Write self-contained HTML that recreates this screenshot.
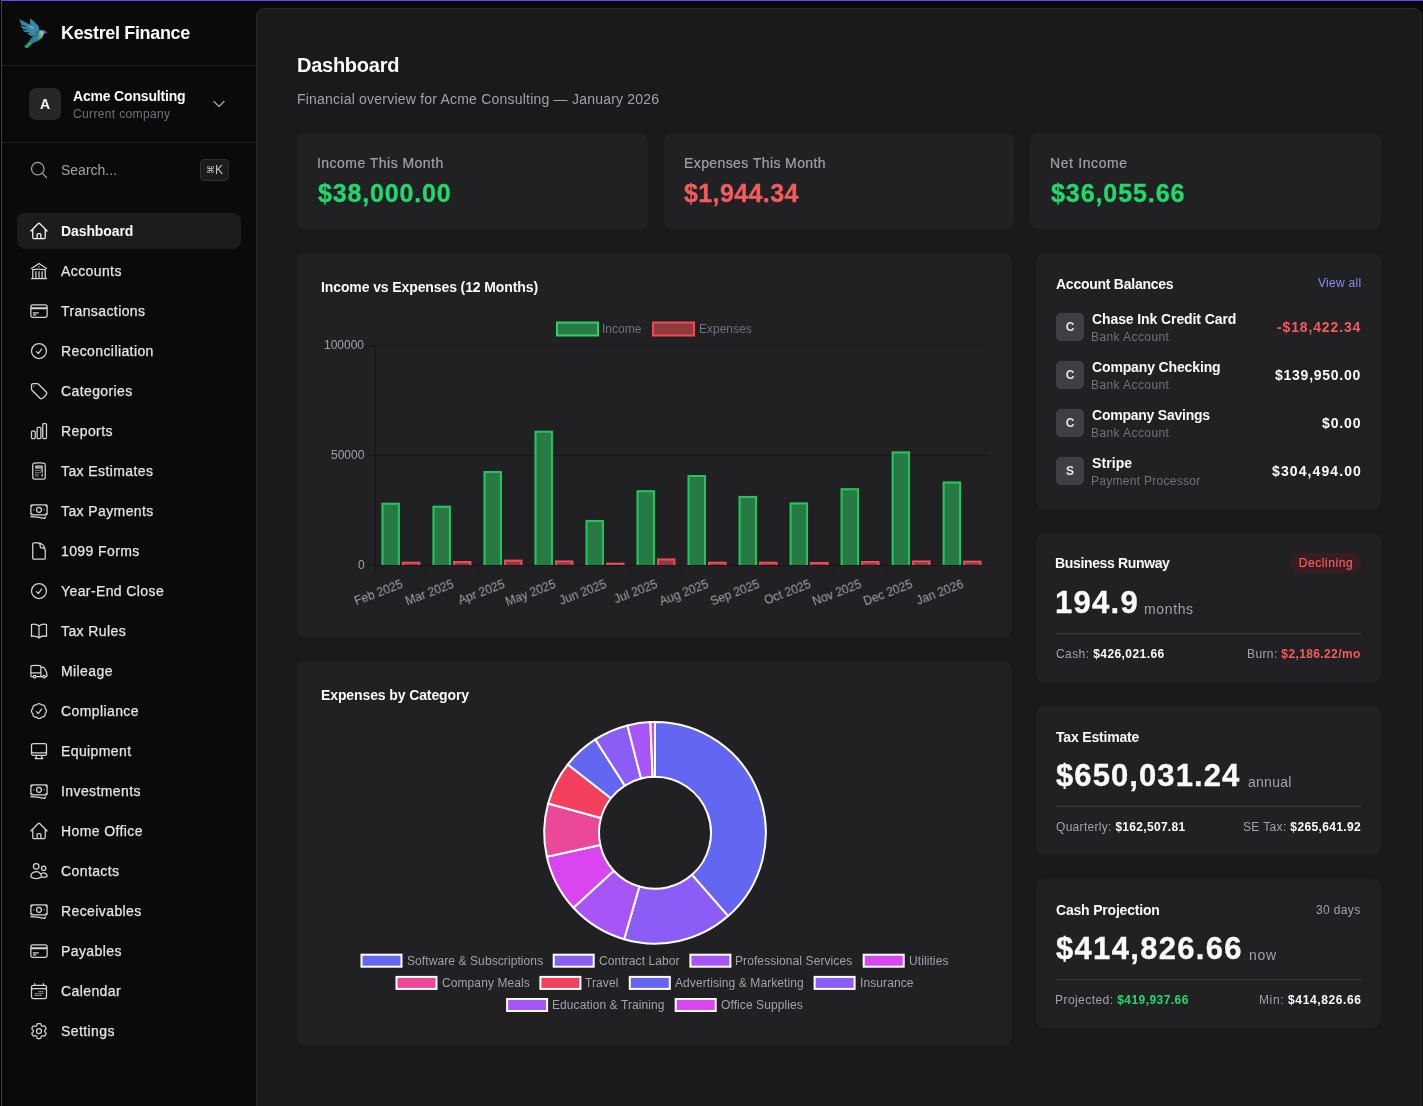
<!DOCTYPE html>
<html><head><meta charset="utf-8"><title>Kestrel Finance - Dashboard</title>
<style>
html,body{margin:0;padding:0;}
body{width:1423px;height:1106px;overflow:hidden;position:relative;background:#0a0a0a;font-family:"Liberation Sans",sans-serif;}
.t{position:absolute;white-space:nowrap;will-change:transform;}
.t b{color:#fafafa;font-weight:700;}
.ic{position:absolute;}
.card{position:absolute;background:#212124;border-radius:8px;}
</style></head><body>
<div style='position:absolute;left:0;top:0;width:1px;height:1106px;background:#000'></div><div style='position:absolute;left:1px;top:1px;width:1px;height:1105px;background:#3f3f42'></div><div style='position:absolute;left:1px;top:0;width:1422px;height:1px;background:#574cf9'></div><div style='position:absolute;left:2px;top:65px;width:254px;height:1px;background:#1e1e20'></div><div style='position:absolute;left:2px;top:142px;width:254px;height:1px;background:#1e1e20'></div><svg style='position:absolute;left:15px;top:14px' width='36' height='36' viewBox='0 0 36 36'>
<path d='M4.2 5.2 L9 7.5 L14 10 L19 12.5 L22.5 16.5 L19.5 21.5 L17.5 22.8 L12 19.5 L8 16.8 L8.5 15.5 L5.5 11.5 L6.5 11 Z' fill='#3389a4'/>
<path d='M15.3 4.2 L19.5 8 L23.5 12 L24.5 16.8 L21 18 L17 14 L14.8 9 Z' fill='#3389a4'/>
<path d='M23 16.5 L26.5 15.8 L29.5 16.3 L32.2 18.6 L29 20 L27.5 23.5 L24 26.5 L19 28.5 L15 31.5 L12 34 L8.8 32.8 L13 28.5 L16.5 24 L19.5 21 Z' fill='#2f7d96'/>
<path d='M24.5 17 L27.8 16.8 L28.8 19.5 L26.5 24 L24 22 Z' fill='#a8a8ae'/>
<path d='M13 11 L17.5 13 L19.5 15 L16 14 Z' fill='#b9a9b4'/>
<path d='M23 21.5 L26 21 L25.5 25 L22.5 25 Z' fill='#22c04f'/>
<path d='M10.5 33.8 L14.5 29 L17.5 28.5 L13 33.8 Z' fill='#22b04a'/>
<path d='M15 14 L17.5 15.5 L16.5 16.5 Z' fill='#22c04f'/>
<path d='M5.8 11.2 L10.5 12.5 M7.5 15.5 L11.5 15.8 M10.5 18.5 L14.5 18.8' stroke='#0c0c0c' stroke-width='0.9' fill='none'/>
<path d='M17.5 22.8 L18.5 22' stroke='#0c0c0c' stroke-width='0.9'/>
</svg><div style='position:absolute;left:29px;top:88px;width:32px;height:32px;border-radius:7px;background:#27272a;color:#fafafa;font-weight:700;font-size:14px;line-height:32px;text-align:center;will-change:transform'>A</div><svg class='ic' style='left:211px;top:96px' width='16' height='16' viewBox='0 0 24 24' fill='none' stroke='#a1a1aa' stroke-width='2' stroke-linecap='round' stroke-linejoin='round'><path d='m19.5 8.25-7.5 7.5-7.5-7.5'/></svg><svg class='ic' style='left:29px;top:160px' width='20' height='20' viewBox='0 0 24 24' fill='none' stroke='#a1a1aa' stroke-width='1.5' stroke-linecap='round' stroke-linejoin='round'><path d='m21 21-5.197-5.197m0 0A7.5 7.5 0 1 0 5.196 5.196a7.5 7.5 0 0 0 10.607 10.607Z'/></svg><div style='position:absolute;left:200px;top:159px;width:27px;height:20px;border:1px solid #2e2e31;border-radius:4px;background:#1c1c1e;color:#c4c4c8;font-size:12px;line-height:20px;text-align:center;will-change:transform'><span style="font-size:9px;vertical-align:1px">&#8984;</span>K</div><div style='position:absolute;left:17px;top:213px;width:224px;height:36px;border-radius:8px;background:#1c1c1f'></div><svg class='ic' style='left:29px;top:221px' width='20' height='20' viewBox='0 0 24 24' fill='none' stroke='#fafafa' stroke-width='1.5' stroke-linecap='round' stroke-linejoin='round'><path d='m2.25 12 8.954-8.955c.44-.439 1.152-.439 1.591 0L21.75 12M4.5 9.75v10.125c0 .621.504 1.125 1.125 1.125H9.75v-4.875c0-.621.504-1.125 1.125-1.125h2.25c.621 0 1.125.504 1.125 1.125V21h4.125c.621 0 1.125-.504 1.125-1.125V9.75M8.25 21h8.25'/></svg><svg class='ic' style='left:29px;top:261px' width='20' height='20' viewBox='0 0 24 24' fill='none' stroke='#d4d4d8' stroke-width='1.5' stroke-linecap='round' stroke-linejoin='round'><path d='M12 21v-8.25M15.75 21v-8.25M8.25 21v-8.25M3 9l9-6 9 6m-1.5 12V10.332A48.36 48.36 0 0 0 12 9.75c-2.551 0-5.056.2-7.5.582V21M3 21h18M12 6.75h.008v.008H12V6.75Z'/></svg><svg class='ic' style='left:29px;top:301px' width='20' height='20' viewBox='0 0 24 24' fill='none' stroke='#d4d4d8' stroke-width='1.5' stroke-linecap='round' stroke-linejoin='round'><path d='M2.25 8.25h19.5M2.25 9h19.5m-16.5 5.25h6m-6 2.25h3m-3.75 3h15a2.25 2.25 0 0 0 2.25-2.25V6.75A2.25 2.25 0 0 0 19.5 4.5h-15a2.25 2.25 0 0 0-2.25 2.25v10.5A2.25 2.25 0 0 0 4.5 19.5Z'/></svg><svg class='ic' style='left:29px;top:341px' width='20' height='20' viewBox='0 0 24 24' fill='none' stroke='#d4d4d8' stroke-width='1.5' stroke-linecap='round' stroke-linejoin='round'><path d='M9 12.75 11.25 15 15 9.75M21 12a9 9 0 1 1-18 0 9 9 0 0 1 18 0Z'/></svg><svg class='ic' style='left:29px;top:381px' width='20' height='20' viewBox='0 0 24 24' fill='none' stroke='#d4d4d8' stroke-width='1.5' stroke-linecap='round' stroke-linejoin='round'><path d='M9.568 3H5.25A2.25 2.25 0 0 0 3 5.25v4.318c0 .597.237 1.17.659 1.591l9.581 9.581c.699.699 1.78.872 2.607.33a18.095 18.095 0 0 0 5.223-5.223c.542-.827.369-1.908-.33-2.607L11.16 3.66A2.25 2.25 0 0 0 9.568 3Z M6 6h.008v.008H6V6Z'/></svg><svg class='ic' style='left:29px;top:421px' width='20' height='20' viewBox='0 0 24 24' fill='none' stroke='#d4d4d8' stroke-width='1.5' stroke-linecap='round' stroke-linejoin='round'><path d='M3 13.125C3 12.504 3.504 12 4.125 12h2.25c.621 0 1.125.504 1.125 1.125v6.75C7.5 20.496 6.996 21 6.375 21h-2.25A1.125 1.125 0 0 1 3 19.875v-6.75ZM9.75 8.625c0-.621.504-1.125 1.125-1.125h2.25c.621 0 1.125.504 1.125 1.125v11.25c0 .621-.504 1.125-1.125 1.125h-2.25a1.125 1.125 0 0 1-1.125-1.125V8.625ZM16.5 4.125c0-.621.504-1.125 1.125-1.125h2.25C20.496 3 21 3.504 21 4.125v15.75c0 .621-.504 1.125-1.125 1.125h-2.25a1.125 1.125 0 0 1-1.125-1.125V4.125Z'/></svg><svg class='ic' style='left:29px;top:461px' width='20' height='20' viewBox='0 0 24 24' fill='none' stroke='#d4d4d8' stroke-width='1.5' stroke-linecap='round' stroke-linejoin='round'><path d='M15.75 15.75V18m-7.5-6.75h.008v.008H8.25v-.008Zm0 2.25h.008v.008H8.25V13.5Zm0 2.25h.008v.008H8.25v-.008Zm0 2.25h.008v.008H8.25V18Zm2.498-6.75h.007v.008h-.007v-.008Zm0 2.25h.007v.008h-.007V13.5Zm0 2.25h.007v.008h-.007v-.008Zm0 2.25h.007v.008h-.007V18Zm2.504-6.75h.008v.008h-.008v-.008Zm0 2.25h.008v.008h-.008V13.5Zm2.498-6.75h.008v.008h-.008v-.008Zm0 2.25h.008v.008h-.008V13.5ZM8.25 6h7.5v2.25h-7.5V6ZM12 2.25c-1.892 0-3.758.11-5.593.322C5.307 2.7 4.5 3.65 4.5 4.757V19.5a2.25 2.25 0 0 0 2.25 2.25h10.5a2.25 2.25 0 0 0 2.25-2.25V4.757c0-1.108-.806-2.057-1.907-2.185A48.507 48.507 0 0 0 12 2.25Z'/></svg><svg class='ic' style='left:29px;top:501px' width='20' height='20' viewBox='0 0 24 24' fill='none' stroke='#d4d4d8' stroke-width='1.5' stroke-linecap='round' stroke-linejoin='round'><path d='M2.25 18.75a60.07 60.07 0 0 1 15.797 2.101c.727.198 1.453-.342 1.453-1.096V18.75M3.75 4.5v.75A.75.75 0 0 1 3 6h-.75m0 0v-.375c0-.621.504-1.125 1.125-1.125H20.25M2.25 6v9m18-10.5v.75c0 .414.336.75.75.75h.75m-1.5-1.5h.375c.621 0 1.125.504 1.125 1.125v9.75c0 .621-.504 1.125-1.125 1.125h-.375m1.5-1.5H21a.75.75 0 0 0-.75.75v.75m0 0H3.75m0 0h-.375a1.125 1.125 0 0 1-1.125-1.125V15m1.5 1.5v-.75A.75.75 0 0 0 3 15h-.75M15 10.5a3 3 0 1 1-6 0 3 3 0 0 1 6 0Zm3 0h.008v.008H18V10.5Zm-12 0h.008v.008H6V10.5Z'/></svg><svg class='ic' style='left:29px;top:541px' width='20' height='20' viewBox='0 0 24 24' fill='none' stroke='#d4d4d8' stroke-width='1.5' stroke-linecap='round' stroke-linejoin='round'><path d='M19.5 14.25v-2.625a3.375 3.375 0 0 0-3.375-3.375h-1.5A1.125 1.125 0 0 1 13.5 7.125v-1.5a3.375 3.375 0 0 0-3.375-3.375H8.25m2.25 0H5.625c-.621 0-1.125.504-1.125 1.125v17.25c0 .621.504 1.125 1.125 1.125h12.75c.621 0 1.125-.504 1.125-1.125V11.25a9 9 0 0 0-9-9Z'/></svg><svg class='ic' style='left:29px;top:581px' width='20' height='20' viewBox='0 0 24 24' fill='none' stroke='#d4d4d8' stroke-width='1.5' stroke-linecap='round' stroke-linejoin='round'><path d='M9 12.75 11.25 15 15 9.75M21 12a9 9 0 1 1-18 0 9 9 0 0 1 18 0Z'/></svg><svg class='ic' style='left:29px;top:621px' width='20' height='20' viewBox='0 0 24 24' fill='none' stroke='#d4d4d8' stroke-width='1.5' stroke-linecap='round' stroke-linejoin='round'><path d='M12 6.042A8.967 8.967 0 0 0 6 3.75c-1.052 0-2.062.18-3 .512v14.25A8.987 8.987 0 0 1 6 18c2.305 0 4.408.867 6 2.292m0-14.25a8.966 8.966 0 0 1 6-2.292c1.052 0 2.062.18 3 .512v14.25A8.987 8.987 0 0 0 18 18a8.967 8.967 0 0 0-6 2.292m0-14.25v14.25'/></svg><svg class='ic' style='left:29px;top:661px' width='20' height='20' viewBox='0 0 24 24' fill='none' stroke='#d4d4d8' stroke-width='1.5' stroke-linecap='round' stroke-linejoin='round'><path d='M8.25 18.75a1.5 1.5 0 0 1-3 0m3 0a1.5 1.5 0 0 0-3 0m3 0h6m-9 0H3.375a1.125 1.125 0 0 1-1.125-1.125V14.25m17.25 4.5a1.5 1.5 0 0 1-3 0m3 0a1.5 1.5 0 0 0-3 0m3 0h1.125c.621 0 1.129-.504 1.09-1.124a17.902 17.902 0 0 0-3.213-9.193 2.056 2.056 0 0 0-1.58-.86H14.25M16.5 18.75h-2.25m0-11.177v-.958c0-.568-.422-1.048-.987-1.106a48.554 48.554 0 0 0-10.026 0 1.106 1.106 0 0 0-.987 1.106v7.635m12-6.677v6.677m0 4.5v-4.5m0 0h-12'/></svg><svg class='ic' style='left:29px;top:701px' width='20' height='20' viewBox='0 0 24 24' fill='none' stroke='#d4d4d8' stroke-width='1.5' stroke-linecap='round' stroke-linejoin='round'><path d='M9 12.75 11.25 15 15 9.75M21 12c0 1.268-.63 2.39-1.593 3.068a3.745 3.745 0 0 1-1.043 3.296 3.745 3.745 0 0 1-3.296 1.043A3.745 3.745 0 0 1 12 21c-1.268 0-2.39-.63-3.068-1.593a3.746 3.746 0 0 1-3.296-1.043 3.745 3.745 0 0 1-1.043-3.296A3.745 3.745 0 0 1 3 12c0-1.268.63-2.39 1.593-3.068a3.745 3.745 0 0 1 1.043-3.296 3.746 3.746 0 0 1 3.296-1.043A3.746 3.746 0 0 1 12 3c1.268 0 2.39.63 3.068 1.593a3.746 3.746 0 0 1 3.296 1.043 3.746 3.746 0 0 1 1.043 3.296A3.745 3.745 0 0 1 21 12Z'/></svg><svg class='ic' style='left:29px;top:741px' width='20' height='20' viewBox='0 0 24 24' fill='none' stroke='#d4d4d8' stroke-width='1.5' stroke-linecap='round' stroke-linejoin='round'><path d='M9 17.25v1.007a3 3 0 0 1-.879 2.122L7.5 21h9l-.621-.621A3 3 0 0 1 15 18.257V17.25m6-12V15a2.25 2.25 0 0 1-2.25 2.25H5.25A2.25 2.25 0 0 1 3 15V5.25m18 0A2.25 2.25 0 0 0 18.75 3H5.25A2.25 2.25 0 0 0 3 5.25m18 0V12a2.25 2.25 0 0 1-2.25 2.25H5.25A2.25 2.25 0 0 1 3 12V5.25'/></svg><svg class='ic' style='left:29px;top:781px' width='20' height='20' viewBox='0 0 24 24' fill='none' stroke='#d4d4d8' stroke-width='1.5' stroke-linecap='round' stroke-linejoin='round'><path d='M2.25 18.75a60.07 60.07 0 0 1 15.797 2.101c.727.198 1.453-.342 1.453-1.096V18.75M3.75 4.5v.75A.75.75 0 0 1 3 6h-.75m0 0v-.375c0-.621.504-1.125 1.125-1.125H20.25M2.25 6v9m18-10.5v.75c0 .414.336.75.75.75h.75m-1.5-1.5h.375c.621 0 1.125.504 1.125 1.125v9.75c0 .621-.504 1.125-1.125 1.125h-.375m1.5-1.5H21a.75.75 0 0 0-.75.75v.75m0 0H3.75m0 0h-.375a1.125 1.125 0 0 1-1.125-1.125V15m1.5 1.5v-.75A.75.75 0 0 0 3 15h-.75M15 10.5a3 3 0 1 1-6 0 3 3 0 0 1 6 0Zm3 0h.008v.008H18V10.5Zm-12 0h.008v.008H6V10.5Z'/></svg><svg class='ic' style='left:29px;top:821px' width='20' height='20' viewBox='0 0 24 24' fill='none' stroke='#d4d4d8' stroke-width='1.5' stroke-linecap='round' stroke-linejoin='round'><path d='m2.25 12 8.954-8.955c.44-.439 1.152-.439 1.591 0L21.75 12M4.5 9.75v10.125c0 .621.504 1.125 1.125 1.125H9.75v-4.875c0-.621.504-1.125 1.125-1.125h2.25c.621 0 1.125.504 1.125 1.125V21h4.125c.621 0 1.125-.504 1.125-1.125V9.75M8.25 21h8.25'/></svg><svg class='ic' style='left:29px;top:861px' width='20' height='20' viewBox='0 0 24 24' fill='none' stroke='#d4d4d8' stroke-width='1.5' stroke-linecap='round' stroke-linejoin='round'><path d='M15 19.128a9.38 9.38 0 0 0 2.625.372 9.337 9.337 0 0 0 4.121-.952 4.125 4.125 0 0 0-7.533-2.493M15 19.128v-.003c0-1.113-.285-2.16-.786-3.07M15 19.128v.106A12.318 12.318 0 0 1 8.624 21c-2.331 0-4.512-.645-6.374-1.766l-.001-.109a6.375 6.375 0 0 1 11.964-3.07M12 6.375a3.375 3.375 0 1 1-6.75 0 3.375 3.375 0 0 1 6.75 0Zm8.25 2.25a2.625 2.625 0 1 1-5.25 0 2.625 2.625 0 0 1 5.25 0Z'/></svg><svg class='ic' style='left:29px;top:901px' width='20' height='20' viewBox='0 0 24 24' fill='none' stroke='#d4d4d8' stroke-width='1.5' stroke-linecap='round' stroke-linejoin='round'><path d='M2.25 18.75a60.07 60.07 0 0 1 15.797 2.101c.727.198 1.453-.342 1.453-1.096V18.75M3.75 4.5v.75A.75.75 0 0 1 3 6h-.75m0 0v-.375c0-.621.504-1.125 1.125-1.125H20.25M2.25 6v9m18-10.5v.75c0 .414.336.75.75.75h.75m-1.5-1.5h.375c.621 0 1.125.504 1.125 1.125v9.75c0 .621-.504 1.125-1.125 1.125h-.375m1.5-1.5H21a.75.75 0 0 0-.75.75v.75m0 0H3.75m0 0h-.375a1.125 1.125 0 0 1-1.125-1.125V15m1.5 1.5v-.75A.75.75 0 0 0 3 15h-.75M15 10.5a3 3 0 1 1-6 0 3 3 0 0 1 6 0Zm3 0h.008v.008H18V10.5Zm-12 0h.008v.008H6V10.5Z'/></svg><svg class='ic' style='left:29px;top:941px' width='20' height='20' viewBox='0 0 24 24' fill='none' stroke='#d4d4d8' stroke-width='1.5' stroke-linecap='round' stroke-linejoin='round'><path d='M2.25 8.25h19.5M2.25 9h19.5m-16.5 5.25h6m-6 2.25h3m-3.75 3h15a2.25 2.25 0 0 0 2.25-2.25V6.75A2.25 2.25 0 0 0 19.5 4.5h-15a2.25 2.25 0 0 0-2.25 2.25v10.5A2.25 2.25 0 0 0 4.5 19.5Z'/></svg><svg class='ic' style='left:29px;top:981px' width='20' height='20' viewBox='0 0 24 24' fill='none' stroke='#d4d4d8' stroke-width='1.5' stroke-linecap='round' stroke-linejoin='round'><path d='M6.75 3v2.25M17.25 3v2.25M3 18.75V7.5a2.25 2.25 0 0 1 2.25-2.25h13.5A2.25 2.25 0 0 1 21 7.5v11.25m-18 0A2.25 2.25 0 0 0 5.25 21h13.5A2.25 2.25 0 0 0 21 18.75m-18 0v-7.5A2.25 2.25 0 0 1 5.25 9h13.5A2.25 2.25 0 0 1 21 11.25v7.5m-9-6h.008v.008H12v-.008ZM12 15h.008v.008H12V15Zm0 2.25h.008v.008H12v-.008ZM9.75 15h.008v.008H9.75V15Zm0 2.25h.008v.008H9.75v-.008ZM7.5 15h.008v.008H7.5V15Zm0 2.25h.008v.008H7.5v-.008Zm6.75-4.5h.008v.008h-.008v-.008Zm0 2.25h.008v.008h-.008V15Zm0 2.25h.008v.008h-.008v-.008Zm2.25-4.5h.008v.008H16.5v-.008Zm0 2.25h.008v.008H16.5V15Z'/></svg><svg class='ic' style='left:29px;top:1021px' width='20' height='20' viewBox='0 0 24 24' fill='none' stroke='#d4d4d8' stroke-width='1.5' stroke-linecap='round' stroke-linejoin='round'><path d='M9.594 3.94c.09-.542.56-.94 1.11-.94h2.593c.55 0 1.02.398 1.11.94l.213 1.281c.063.374.313.686.645.87.074.04.147.083.22.127.325.196.72.257 1.075.124l1.217-.456a1.125 1.125 0 0 1 1.37.49l1.296 2.247a1.125 1.125 0 0 1-.26 1.431l-1.003.827c-.293.241-.438.613-.43.992a7.723 7.723 0 0 1 0 .255c-.008.378.137.75.43.991l1.004.827c.424.35.534.955.26 1.43l-1.298 2.247a1.125 1.125 0 0 1-1.369.491l-1.217-.456c-.355-.133-.75-.072-1.076.124a6.47 6.47 0 0 1-.22.128c-.331.183-.581.495-.644.869l-.213 1.281c-.09.543-.56.94-1.11.94h-2.594c-.55 0-1.019-.398-1.11-.94l-.213-1.281c-.062-.374-.312-.686-.644-.87a6.52 6.52 0 0 1-.22-.127c-.325-.196-.72-.257-1.076-.124l-1.217.456a1.125 1.125 0 0 1-1.369-.49l-1.297-2.247a1.125 1.125 0 0 1 .26-1.431l1.004-.827c.292-.24.437-.613.43-.991a6.932 6.932 0 0 1 0-.255c.007-.38-.138-.751-.43-.992l-1.004-.827a1.125 1.125 0 0 1-.26-1.43l1.297-2.247a1.125 1.125 0 0 1 1.37-.491l1.216.456c.356.133.751.072 1.076-.124.072-.044.146-.086.22-.128.332-.183.582-.495.644-.869l.214-1.28Z M15 12a3 3 0 1 1-6 0 3 3 0 0 1 6 0Z'/></svg><div style='position:absolute;left:256px;top:8px;width:1164px;height:1120px;border:1px solid #2a2a2d;border-radius:8px;background:#1a1a1c'></div><div class='card' style='left:297px;top:133px;width:350.67px;height:96px'></div><div class='card' style='left:663.67px;top:133px;width:350.67px;height:96px'></div><div class='card' style='left:1030.33px;top:133px;width:350.67px;height:96px'></div><div class='card' style='left:297px;top:253px;width:714.67px;height:384px'></div><div class='card' style='left:297px;top:661px;width:714.67px;height:384px'></div><div class='card' style='left:1035.67px;top:253px;width:345.33px;height:256px'></div><div class='card' style='left:1035.67px;top:533px;width:345.33px;height:149px'></div><div class='card' style='left:1035.67px;top:706px;width:345.33px;height:149px'></div><div class='card' style='left:1035.67px;top:879px;width:345.33px;height:149px'></div><div style='position:absolute;left:1056px;top:313px;width:28px;height:28px;border-radius:5px;background:#3f3f46;color:#e4e4e7;font-weight:700;font-size:12px;line-height:28px;text-align:center;will-change:transform'>C</div><div style='position:absolute;left:1056px;top:361px;width:28px;height:28px;border-radius:5px;background:#3f3f46;color:#e4e4e7;font-weight:700;font-size:12px;line-height:28px;text-align:center;will-change:transform'>C</div><div style='position:absolute;left:1056px;top:409px;width:28px;height:28px;border-radius:5px;background:#3f3f46;color:#e4e4e7;font-weight:700;font-size:12px;line-height:28px;text-align:center;will-change:transform'>C</div><div style='position:absolute;left:1056px;top:457px;width:28px;height:28px;border-radius:5px;background:#3f3f46;color:#e4e4e7;font-weight:700;font-size:12px;line-height:28px;text-align:center;will-change:transform'>S</div><div style='position:absolute;left:1291px;top:553px;width:70px;height:20px;border-radius:10px;background:#3a1d20'></div><div style='position:absolute;left:1056px;top:633px;width:305px;height:1px;background:#3a3a3e'></div><div style='position:absolute;left:1056px;top:806px;width:305px;height:1px;background:#3a3a3e'></div><div style='position:absolute;left:1056px;top:979px;width:305px;height:1px;background:#3a3a3e'></div><svg style='position:absolute;left:0;top:0' width='1423' height='1106' viewBox='0 0 1423 1106'><rect x='367' y='345' width='620.6' height='1' fill='#161618'/><rect x='367' y='455' width='620.6' height='1' fill='#161618'/><rect x='367' y='565' width='620.6' height='1' fill='#161618'/><rect x='375' y='345' width='1' height='228' fill='#161618'/><rect x='426' y='566' width='1' height='7' fill='#1b1b1d'/><rect x='477' y='566' width='1' height='7' fill='#1b1b1d'/><rect x='528' y='566' width='1' height='7' fill='#1b1b1d'/><rect x='579' y='566' width='1' height='7' fill='#1b1b1d'/><rect x='630' y='566' width='1' height='7' fill='#1b1b1d'/><rect x='681' y='566' width='1' height='7' fill='#1b1b1d'/><rect x='732' y='566' width='1' height='7' fill='#1b1b1d'/><rect x='783' y='566' width='1' height='7' fill='#1b1b1d'/><rect x='834' y='566' width='1' height='7' fill='#1b1b1d'/><rect x='885' y='566' width='1' height='7' fill='#1b1b1d'/><rect x='936' y='566' width='1' height='7' fill='#1b1b1d'/><rect x='987' y='566' width='1' height='7' fill='#1b1b1d'/><rect x='381.52' y='502.81' width='18.37' height='62.19' fill='#287a45'/><path d='M382.52,565 L382.52,503.81 L398.89,503.81 L398.89,565' fill='none' stroke='#22c55e' stroke-width='2'/><rect x='401.93' y='561.81' width='18.37' height='3.19' fill='#8f3a3d'/><path d='M402.93,565 L402.93,562.81 L419.29,562.81 L419.29,565' fill='none' stroke='#f0485a' stroke-width='2'/><rect x='432.54' y='505.82' width='18.37' height='59.18' fill='#287a45'/><path d='M433.54,565 L433.54,506.82 L449.90,506.82 L449.90,565' fill='none' stroke='#22c55e' stroke-width='2'/><rect x='452.95' y='561.04' width='18.37' height='3.96' fill='#8f3a3d'/><path d='M453.95,565 L453.95,562.04 L470.31,562.04 L470.31,565' fill='none' stroke='#f0485a' stroke-width='2'/><rect x='483.56' y='471.06' width='18.37' height='93.94' fill='#287a45'/><path d='M484.56,565 L484.56,472.06 L500.92,472.06 L500.92,565' fill='none' stroke='#22c55e' stroke-width='2'/><rect x='503.96' y='559.72' width='18.37' height='5.28' fill='#8f3a3d'/><path d='M504.96,565 L504.96,560.72 L521.33,560.72 L521.33,565' fill='none' stroke='#f0485a' stroke-width='2'/><rect x='534.57' y='430.80' width='18.37' height='134.20' fill='#287a45'/><path d='M535.57,565 L535.57,431.80 L551.94,431.80 L551.94,565' fill='none' stroke='#22c55e' stroke-width='2'/><rect x='554.98' y='560.60' width='18.37' height='4.40' fill='#8f3a3d'/><path d='M555.98,565 L555.98,561.60 L572.34,561.60 L572.34,565' fill='none' stroke='#f0485a' stroke-width='2'/><rect x='585.59' y='519.90' width='18.37' height='45.10' fill='#287a45'/><path d='M586.59,565 L586.59,520.90 L602.95,520.90 L602.95,565' fill='none' stroke='#22c55e' stroke-width='2'/><rect x='606.00' y='562.80' width='18.37' height='2.20' fill='#8f3a3d'/><path d='M607.00,565 L607.00,563.80 L623.36,563.80 L623.36,565' fill='none' stroke='#f0485a' stroke-width='2'/><rect x='636.61' y='490.20' width='18.37' height='74.80' fill='#287a45'/><path d='M637.61,565 L637.61,491.20 L653.97,491.20 L653.97,565' fill='none' stroke='#22c55e' stroke-width='2'/><rect x='657.01' y='558.62' width='18.37' height='6.38' fill='#8f3a3d'/><path d='M658.01,565 L658.01,559.62 L674.38,559.62 L674.38,565' fill='none' stroke='#f0485a' stroke-width='2'/><rect x='687.62' y='475.02' width='18.37' height='89.98' fill='#287a45'/><path d='M688.62,565 L688.62,476.02 L704.99,476.02 L704.99,565' fill='none' stroke='#22c55e' stroke-width='2'/><rect x='708.03' y='561.81' width='18.37' height='3.19' fill='#8f3a3d'/><path d='M709.03,565 L709.03,562.81 L725.39,562.81 L725.39,565' fill='none' stroke='#f0485a' stroke-width='2'/><rect x='738.64' y='495.92' width='18.37' height='69.08' fill='#287a45'/><path d='M739.64,565 L739.64,496.92 L756.00,496.92 L756.00,565' fill='none' stroke='#22c55e' stroke-width='2'/><rect x='759.05' y='561.81' width='18.37' height='3.19' fill='#8f3a3d'/><path d='M760.05,565 L760.05,562.81 L776.41,562.81 L776.41,565' fill='none' stroke='#f0485a' stroke-width='2'/><rect x='789.66' y='502.41' width='18.37' height='62.59' fill='#287a45'/><path d='M790.66,565 L790.66,503.41 L807.02,503.41 L807.02,565' fill='none' stroke='#22c55e' stroke-width='2'/><rect x='810.06' y='562.03' width='18.37' height='2.97' fill='#8f3a3d'/><path d='M811.06,565 L811.06,563.03 L827.43,563.03 L827.43,565' fill='none' stroke='#f0485a' stroke-width='2'/><rect x='840.67' y='488.22' width='18.37' height='76.78' fill='#287a45'/><path d='M841.67,565 L841.67,489.22 L858.04,489.22 L858.04,565' fill='none' stroke='#22c55e' stroke-width='2'/><rect x='861.08' y='561.04' width='18.37' height='3.96' fill='#8f3a3d'/><path d='M862.08,565 L862.08,562.04 L878.44,562.04 L878.44,565' fill='none' stroke='#f0485a' stroke-width='2'/><rect x='891.69' y='451.48' width='18.37' height='113.52' fill='#287a45'/><path d='M892.69,565 L892.69,452.48 L909.05,452.48 L909.05,565' fill='none' stroke='#22c55e' stroke-width='2'/><rect x='912.10' y='560.60' width='18.37' height='4.40' fill='#8f3a3d'/><path d='M913.10,565 L913.10,561.60 L929.46,561.60 L929.46,565' fill='none' stroke='#f0485a' stroke-width='2'/><rect x='942.71' y='481.62' width='18.37' height='83.38' fill='#287a45'/><path d='M943.71,565 L943.71,482.62 L960.07,482.62 L960.07,565' fill='none' stroke='#22c55e' stroke-width='2'/><rect x='963.11' y='560.72' width='18.37' height='4.28' fill='#8f3a3d'/><path d='M964.11,565 L964.11,561.72 L980.48,561.72 L980.48,565' fill='none' stroke='#f0485a' stroke-width='2'/><rect x='557' y='322.5' width='41' height='13' fill='#287a45' stroke='#2fd165' stroke-width='2'/><rect x='653' y='322.5' width='41' height='13' fill='#8f3a3d' stroke='#f0485a' stroke-width='2'/><path d='M655.00,722.00 A110.8,110.8 0 0 1 728.13,916.04 L691.96,874.87 A56,56 0 0 0 655.00,776.80 Z' fill='#6366f1' stroke='#ffffff' stroke-width='2' stroke-linejoin='round'/><path d='M728.13,916.04 A110.8,110.8 0 0 1 624.09,939.20 L639.38,886.58 A56,56 0 0 0 691.96,874.87 Z' fill='#8b5cf6' stroke='#ffffff' stroke-width='2' stroke-linejoin='round'/><path d='M624.09,939.20 A110.8,110.8 0 0 1 573.44,907.80 L613.78,870.71 A56,56 0 0 0 639.38,886.58 Z' fill='#a855f7' stroke='#ffffff' stroke-width='2' stroke-linejoin='round'/><path d='M573.44,907.80 A110.8,110.8 0 0 1 546.83,856.78 L600.33,844.92 A56,56 0 0 0 613.78,870.71 Z' fill='#d946ef' stroke='#ffffff' stroke-width='2' stroke-linejoin='round'/><path d='M546.83,856.78 A110.8,110.8 0 0 1 548.13,803.56 L600.98,818.02 A56,56 0 0 0 600.33,844.92 Z' fill='#ec4899' stroke='#ffffff' stroke-width='2' stroke-linejoin='round'/><path d='M548.13,803.56 A110.8,110.8 0 0 1 567.81,764.43 L610.93,798.25 A56,56 0 0 0 600.98,818.02 Z' fill='#f43f5e' stroke='#ffffff' stroke-width='2' stroke-linejoin='round'/><path d='M567.81,764.43 A110.8,110.8 0 0 1 595.30,739.46 L624.83,785.62 A56,56 0 0 0 610.93,798.25 Z' fill='#6366f1' stroke='#ffffff' stroke-width='2' stroke-linejoin='round'/><path d='M595.30,739.46 A110.8,110.8 0 0 1 627.45,725.48 L641.07,778.56 A56,56 0 0 0 624.83,785.62 Z' fill='#8b5cf6' stroke='#ffffff' stroke-width='2' stroke-linejoin='round'/><path d='M627.45,725.48 A110.8,110.8 0 0 1 650.36,722.10 L652.65,776.85 A56,56 0 0 0 641.07,778.56 Z' fill='#a855f7' stroke='#ffffff' stroke-width='2' stroke-linejoin='round'/><path d='M650.36,722.10 A110.8,110.8 0 0 1 655.00,722.00 L655.00,776.80 A56,56 0 0 0 652.65,776.85 Z' fill='#d946ef' stroke='#ffffff' stroke-width='2' stroke-linejoin='round'/></svg><svg style='position:absolute;left:0;top:0' width='1423' height='1106' viewBox='0 0 1423 1106'><rect x='361.5' y='954.7' width='40' height='12' fill='#6366f1' stroke='#fff' stroke-width='2'/><rect x='553.7' y='954.7' width='40' height='12' fill='#8b5cf6' stroke='#fff' stroke-width='2'/><rect x='690.4' y='954.7' width='40' height='12' fill='#a855f7' stroke='#fff' stroke-width='2'/><rect x='863.7' y='954.7' width='40' height='12' fill='#d946ef' stroke='#fff' stroke-width='2'/><rect x='396.5' y='976.9' width='40' height='12' fill='#ec4899' stroke='#fff' stroke-width='2'/><rect x='540.4' y='976.9' width='40' height='12' fill='#f43f5e' stroke='#fff' stroke-width='2'/><rect x='629.8' y='976.9' width='40' height='12' fill='#6366f1' stroke='#fff' stroke-width='2'/><rect x='814.6' y='976.9' width='40' height='12' fill='#8b5cf6' stroke='#fff' stroke-width='2'/><rect x='507.1' y='999.0' width='40' height='12' fill='#a855f7' stroke='#fff' stroke-width='2'/><rect x='675.7' y='999.0' width='40' height='12' fill='#d946ef' stroke='#fff' stroke-width='2'/></svg><div class='t' style='left:348.7px;top:577px;width:50.7px;font-size:12px;line-height:14px;color:#a1a1aa;transform-origin:100% 0;transform:rotate(-21deg)'>Feb 2025</div><div class='t' style='left:399.7px;top:577px;width:50.7px;font-size:12px;line-height:14px;color:#a1a1aa;transform-origin:100% 0;transform:rotate(-21deg)'>Mar 2025</div><div class='t' style='left:452.7px;top:577px;width:48.7px;font-size:12px;line-height:14px;color:#a1a1aa;transform-origin:100% 0;transform:rotate(-21deg)'>Apr 2025</div><div class='t' style='left:499.8px;top:577px;width:52.7px;font-size:12px;line-height:14px;color:#a1a1aa;transform-origin:100% 0;transform:rotate(-21deg)'>May 2025</div><div class='t' style='left:554.1px;top:577px;width:49.4px;font-size:12px;line-height:14px;color:#a1a1aa;transform-origin:100% 0;transform:rotate(-21deg)'>Jun 2025</div><div class='t' style='left:609.1px;top:577px;width:45.4px;font-size:12px;line-height:14px;color:#a1a1aa;transform-origin:100% 0;transform:rotate(-21deg)'>Jul 2025</div><div class='t' style='left:654.1px;top:577px;width:51.4px;font-size:12px;line-height:14px;color:#a1a1aa;transform-origin:100% 0;transform:rotate(-21deg)'>Aug 2025</div><div class='t' style='left:705.1px;top:577px;width:51.4px;font-size:12px;line-height:14px;color:#a1a1aa;transform-origin:100% 0;transform:rotate(-21deg)'>Sep 2025</div><div class='t' style='left:758.8px;top:577px;width:48.7px;font-size:12px;line-height:14px;color:#a1a1aa;transform-origin:100% 0;transform:rotate(-21deg)'>Oct 2025</div><div class='t' style='left:807.2px;top:577px;width:51.4px;font-size:12px;line-height:14px;color:#a1a1aa;transform-origin:100% 0;transform:rotate(-21deg)'>Nov 2025</div><div class='t' style='left:858.2px;top:577px;width:51.4px;font-size:12px;line-height:14px;color:#a1a1aa;transform-origin:100% 0;transform:rotate(-21deg)'>Dec 2025</div><div class='t' style='left:911.2px;top:577px;width:49.4px;font-size:12px;line-height:14px;color:#a1a1aa;transform-origin:100% 0;transform:rotate(-21deg)'>Jan 2026</div><div class='t' id='t0' style='top:24.46px;font-size:18px;line-height:18px;font-weight:700;color:#fafafa;letter-spacing:-0.344px;left:61.08px;'>Kestrel Finance</div><div class='t' id='t1' style='top:89.45px;font-size:14px;line-height:14px;font-weight:700;color:#fafafa;letter-spacing:-0.182px;left:72.74px;'>Acme Consulting</div><div class='t' id='t2' style='top:107.84px;font-size:12px;line-height:12px;font-weight:400;color:#71717a;letter-spacing:0.352px;left:72.82px;'>Current company</div><div class='t' id='t3' style='top:163.15px;font-size:14px;line-height:14px;font-weight:400;color:#a1a1aa;left:60.94px;'>Search...</div><div class='t' id='t4' style='top:224.15px;font-size:14px;line-height:14px;font-weight:700;color:#fafafa;letter-spacing:-0.100px;left:60.94px;'>Dashboard</div><div class='t' id='t5' style='top:264.15px;font-size:14px;line-height:14px;font-weight:400;color:#e4e4e7;letter-spacing:0.400px;-webkit-text-stroke:0.25px #e4e4e7;left:60.94px;'>Accounts</div><div class='t' id='t6' style='top:304.15px;font-size:14px;line-height:14px;font-weight:400;color:#e4e4e7;letter-spacing:0.400px;-webkit-text-stroke:0.25px #e4e4e7;left:60.94px;'>Transactions</div><div class='t' id='t7' style='top:344.15px;font-size:14px;line-height:14px;font-weight:400;color:#e4e4e7;letter-spacing:0.400px;-webkit-text-stroke:0.25px #e4e4e7;left:60.94px;'>Reconciliation</div><div class='t' id='t8' style='top:384.15px;font-size:14px;line-height:14px;font-weight:400;color:#e4e4e7;letter-spacing:0.400px;-webkit-text-stroke:0.25px #e4e4e7;left:60.94px;'>Categories</div><div class='t' id='t9' style='top:424.15px;font-size:14px;line-height:14px;font-weight:400;color:#e4e4e7;letter-spacing:0.400px;-webkit-text-stroke:0.25px #e4e4e7;left:60.94px;'>Reports</div><div class='t' id='t10' style='top:464.15px;font-size:14px;line-height:14px;font-weight:400;color:#e4e4e7;letter-spacing:0.400px;-webkit-text-stroke:0.25px #e4e4e7;left:60.94px;'>Tax Estimates</div><div class='t' id='t11' style='top:504.15px;font-size:14px;line-height:14px;font-weight:400;color:#e4e4e7;letter-spacing:0.400px;-webkit-text-stroke:0.25px #e4e4e7;left:60.94px;'>Tax Payments</div><div class='t' id='t12' style='top:544.15px;font-size:14px;line-height:14px;font-weight:400;color:#e4e4e7;letter-spacing:0.400px;-webkit-text-stroke:0.25px #e4e4e7;left:60.94px;'>1099 Forms</div><div class='t' id='t13' style='top:584.15px;font-size:14px;line-height:14px;font-weight:400;color:#e4e4e7;letter-spacing:0.400px;-webkit-text-stroke:0.25px #e4e4e7;left:60.94px;'>Year-End Close</div><div class='t' id='t14' style='top:624.15px;font-size:14px;line-height:14px;font-weight:400;color:#e4e4e7;letter-spacing:0.400px;-webkit-text-stroke:0.25px #e4e4e7;left:60.94px;'>Tax Rules</div><div class='t' id='t15' style='top:664.15px;font-size:14px;line-height:14px;font-weight:400;color:#e4e4e7;letter-spacing:0.400px;-webkit-text-stroke:0.25px #e4e4e7;left:60.94px;'>Mileage</div><div class='t' id='t16' style='top:704.15px;font-size:14px;line-height:14px;font-weight:400;color:#e4e4e7;letter-spacing:0.400px;-webkit-text-stroke:0.25px #e4e4e7;left:60.94px;'>Compliance</div><div class='t' id='t17' style='top:744.15px;font-size:14px;line-height:14px;font-weight:400;color:#e4e4e7;letter-spacing:0.400px;-webkit-text-stroke:0.25px #e4e4e7;left:60.94px;'>Equipment</div><div class='t' id='t18' style='top:784.15px;font-size:14px;line-height:14px;font-weight:400;color:#e4e4e7;letter-spacing:0.400px;-webkit-text-stroke:0.25px #e4e4e7;left:60.94px;'>Investments</div><div class='t' id='t19' style='top:824.15px;font-size:14px;line-height:14px;font-weight:400;color:#e4e4e7;letter-spacing:0.400px;-webkit-text-stroke:0.25px #e4e4e7;left:60.94px;'>Home Office</div><div class='t' id='t20' style='top:864.15px;font-size:14px;line-height:14px;font-weight:400;color:#e4e4e7;letter-spacing:0.400px;-webkit-text-stroke:0.25px #e4e4e7;left:60.94px;'>Contacts</div><div class='t' id='t21' style='top:904.15px;font-size:14px;line-height:14px;font-weight:400;color:#e4e4e7;letter-spacing:0.400px;-webkit-text-stroke:0.25px #e4e4e7;left:60.94px;'>Receivables</div><div class='t' id='t22' style='top:944.15px;font-size:14px;line-height:14px;font-weight:400;color:#e4e4e7;letter-spacing:0.400px;-webkit-text-stroke:0.25px #e4e4e7;left:60.94px;'>Payables</div><div class='t' id='t23' style='top:984.15px;font-size:14px;line-height:14px;font-weight:400;color:#e4e4e7;letter-spacing:0.400px;-webkit-text-stroke:0.25px #e4e4e7;left:60.94px;'>Calendar</div><div class='t' id='t24' style='top:1024.15px;font-size:14px;line-height:14px;font-weight:400;color:#e4e4e7;letter-spacing:0.400px;-webkit-text-stroke:0.25px #e4e4e7;left:60.94px;'>Settings</div><div class='t' id='t25' style='top:54.87px;font-size:20px;line-height:20px;font-weight:700;color:#fafafa;letter-spacing:-0.261px;left:296.90px;'>Dashboard</div><div class='t' id='t26' style='top:92.15px;font-size:14px;line-height:14px;font-weight:400;color:#a1a1aa;letter-spacing:0.215px;left:297.04px;'>Financial overview for Acme Consulting — January 2026</div><div class='t' id='t27' style='top:156.15px;font-size:14px;line-height:14px;font-weight:400;color:#a1a1aa;letter-spacing:0.464px;-webkit-text-stroke:0.2px #a1a1aa;left:316.72px;'>Income This Month</div><div class='t' id='t28' style='top:180.74px;font-size:25px;line-height:25px;font-weight:700;color:#22d86c;letter-spacing:0.837px;-webkit-text-stroke:0.35px #22d86c;left:317.53px;'>$38,000.00</div><div class='t' id='t29' style='top:156.15px;font-size:14px;line-height:14px;font-weight:400;color:#a1a1aa;letter-spacing:0.403px;-webkit-text-stroke:0.2px #a1a1aa;left:683.63px;'>Expenses This Month</div><div class='t' id='t30' style='top:180.74px;font-size:25px;line-height:25px;font-weight:700;color:#f25c5c;letter-spacing:0.395px;-webkit-text-stroke:0.35px #f25c5c;left:684.37px;'>$1,944.34</div><div class='t' id='t31' style='top:156.15px;font-size:14px;line-height:14px;font-weight:400;color:#a1a1aa;letter-spacing:0.614px;-webkit-text-stroke:0.2px #a1a1aa;left:1050.47px;'>Net Income</div><div class='t' id='t32' style='top:180.74px;font-size:25px;line-height:25px;font-weight:700;color:#22d86c;letter-spacing:0.919px;-webkit-text-stroke:0.35px #22d86c;left:1051.09px;'>$36,055.66</div><div class='t' id='t33' style='top:280.15px;font-size:14px;line-height:14px;font-weight:700;color:#fafafa;letter-spacing:-0.106px;left:321.24px;'>Income vs Expenses (12 Months)</div><div class='t' id='t34' style='top:688.15px;font-size:14px;line-height:14px;font-weight:700;color:#fafafa;letter-spacing:-0.108px;left:321.24px;'>Expenses by Category</div><div class='t' id='t35' style='top:276.65px;font-size:14px;line-height:14px;font-weight:700;color:#fafafa;letter-spacing:-0.254px;left:1056.14px;'>Account Balances</div><div class='t' id='t36' style='top:276.84px;font-size:12px;line-height:12px;font-weight:400;color:#818cf8;letter-spacing:0.291px;right:61.49px;'>View all</div><div class='t' id='t37' style='top:312.15px;font-size:14px;line-height:14px;font-weight:700;color:#fafafa;letter-spacing:-0.097px;left:1091.64px;'>Chase Ink Credit Card</div><div class='t' id='t38' style='top:330.84px;font-size:12px;line-height:12px;font-weight:400;color:#71717a;letter-spacing:0.415px;left:1091.16px;'>Bank Account</div><div class='t' id='t39' style='top:320.35px;font-size:14px;line-height:14px;font-weight:700;color:#f25c5c;letter-spacing:0.859px;right:61.54px;'>-$18,422.34</div><div class='t' id='t40' style='top:360.15px;font-size:14px;line-height:14px;font-weight:700;color:#fafafa;letter-spacing:-0.139px;left:1091.64px;'>Company Checking</div><div class='t' id='t41' style='top:378.84px;font-size:12px;line-height:12px;font-weight:400;color:#71717a;letter-spacing:0.415px;left:1091.16px;'>Bank Account</div><div class='t' id='t42' style='top:368.35px;font-size:14px;line-height:14px;font-weight:700;color:#fafafa;letter-spacing:0.746px;right:61.65px;'>$139,950.00</div><div class='t' id='t43' style='top:408.15px;font-size:14px;line-height:14px;font-weight:700;color:#fafafa;letter-spacing:-0.232px;left:1091.64px;'>Company Savings</div><div class='t' id='t44' style='top:426.84px;font-size:12px;line-height:12px;font-weight:400;color:#71717a;letter-spacing:0.415px;left:1091.16px;'>Bank Account</div><div class='t' id='t45' style='top:416.35px;font-size:14px;line-height:14px;font-weight:700;color:#fafafa;letter-spacing:0.873px;right:61.53px;'>$0.00</div><div class='t' id='t46' style='top:456.15px;font-size:14px;line-height:14px;font-weight:700;color:#fafafa;letter-spacing:0.086px;left:1091.64px;'>Stripe</div><div class='t' id='t47' style='top:474.84px;font-size:12px;line-height:12px;font-weight:400;color:#71717a;letter-spacing:0.284px;left:1091.16px;'>Payment Processor</div><div class='t' id='t48' style='top:464.35px;font-size:14px;line-height:14px;font-weight:700;color:#fafafa;letter-spacing:1.094px;right:61.31px;'>$304,494.00</div><div class='t' id='t49' style='top:556.15px;font-size:14px;line-height:14px;font-weight:700;color:#fafafa;letter-spacing:-0.351px;left:1055.44px;'>Business Runway</div><div class='t' id='t50' style='top:586.76px;font-size:31px;line-height:31px;font-weight:700;color:#fafafa;letter-spacing:1.275px;-webkit-text-stroke:0.35px #fafafa;left:1054.76px;'>194.9</div><div class='t' id='t51' style='top:602.15px;font-size:14px;line-height:14px;font-weight:400;color:#a1a1aa;letter-spacing:0.640px;left:1144.24px;'>months</div><div class='t' id='t52' style='top:648.04px;font-size:12px;line-height:12px;font-weight:400;color:#a1a1aa;letter-spacing:0.421px;left:1055.52px;'>Cash: <b>$426,021.66</b></div><div class='t' id='t53' style='top:648.04px;font-size:12px;line-height:12px;font-weight:400;color:#a1a1aa;letter-spacing:0.384px;right:62.10px;'>Burn: <b style="color:#f25c5c">$2,186.22/mo</b></div><div class='t' id='t54' style='top:729.65px;font-size:14px;line-height:14px;font-weight:700;color:#fafafa;letter-spacing:-0.184px;left:1056.14px;'>Tax Estimate</div><div class='t' id='t55' style='top:760.46px;font-size:31px;line-height:31px;font-weight:700;color:#fafafa;letter-spacing:1.091px;-webkit-text-stroke:0.35px #fafafa;left:1056.16px;'>$650,031.24</div><div class='t' id='t56' style='top:774.85px;font-size:14px;line-height:14px;font-weight:400;color:#a1a1aa;letter-spacing:0.259px;left:1247.74px;'>annual</div><div class='t' id='t57' style='top:821.44px;font-size:12px;line-height:12px;font-weight:400;color:#a1a1aa;letter-spacing:0.305px;left:1055.52px;'>Quarterly: <b>$162,507.81</b></div><div class='t' id='t58' style='top:821.44px;font-size:12px;line-height:12px;font-weight:400;color:#a1a1aa;letter-spacing:0.359px;right:62.12px;'>SE Tax: <b>$265,641.92</b></div><div class='t' id='t59' style='top:902.95px;font-size:14px;line-height:14px;font-weight:700;color:#fafafa;letter-spacing:-0.198px;left:1056.14px;'>Cash Projection</div><div class='t' id='t60' style='top:904.14px;font-size:12px;line-height:12px;font-weight:400;color:#a1a1aa;letter-spacing:0.355px;right:62.13px;'>30 days</div><div class='t' id='t61' style='top:933.06px;font-size:31px;line-height:31px;font-weight:700;color:#fafafa;letter-spacing:1.319px;-webkit-text-stroke:0.35px #fafafa;left:1056.16px;'>$414,826.66</div><div class='t' id='t62' style='top:948.45px;font-size:14px;line-height:14px;font-weight:400;color:#a1a1aa;letter-spacing:0.716px;left:1249.48px;'>now</div><div class='t' id='t63' style='top:993.84px;font-size:12px;line-height:12px;font-weight:400;color:#a1a1aa;letter-spacing:0.441px;left:1054.82px;'>Projected: <b style="color:#22d86c">$419,937.66</b></div><div class='t' id='t64' style='top:993.84px;font-size:12px;line-height:12px;font-weight:400;color:#a1a1aa;letter-spacing:0.614px;right:61.87px;'>Min: <b>$414,826.66</b></div><div class='t' id='t65' style='left:1276.00px;width:100px;text-align:center;top:556.84px;font-size:12px;line-height:12px;color:#f25c5c;letter-spacing:0.575px;-webkit-text-stroke:0.2px #f25c5c;'>Declining</div><div class='t' id='t66' style='top:339.34px;font-size:12px;line-height:12px;font-weight:400;color:#a1a1aa;right:1058.52px;'>100000</div><div class='t' id='t67' style='top:449.34px;font-size:12px;line-height:12px;font-weight:400;color:#a1a1aa;right:1058.52px;'>50000</div><div class='t' id='t68' style='top:559.34px;font-size:12px;line-height:12px;font-weight:400;color:#a1a1aa;right:1058.52px;'>0</div><div class='t' id='t69' style='top:322.84px;font-size:12px;line-height:12px;font-weight:400;color:#71717a;left:602.32px;'>Income</div><div class='t' id='t70' style='top:322.84px;font-size:12px;line-height:12px;font-weight:400;color:#71717a;left:699.22px;'>Expenses</div><div class='t' id='t71' style='top:954.84px;font-size:12px;line-height:12px;font-weight:400;color:#a1a1aa;letter-spacing:0.090px;left:406.52px;'>Software & Subscriptions</div><div class='t' id='t72' style='top:954.84px;font-size:12px;line-height:12px;font-weight:400;color:#a1a1aa;letter-spacing:0.090px;left:598.74px;'>Contract Labor</div><div class='t' id='t73' style='top:954.84px;font-size:12px;line-height:12px;font-weight:400;color:#a1a1aa;letter-spacing:0.090px;left:734.70px;'>Professional Services</div><div class='t' id='t74' style='top:954.84px;font-size:12px;line-height:12px;font-weight:400;color:#a1a1aa;letter-spacing:0.090px;left:908.67px;'>Utilities</div><div class='t' id='t75' style='top:977.04px;font-size:12px;line-height:12px;font-weight:400;color:#a1a1aa;letter-spacing:0.090px;left:441.52px;'>Company Meals</div><div class='t' id='t76' style='top:977.04px;font-size:12px;line-height:12px;font-weight:400;color:#a1a1aa;letter-spacing:0.090px;left:585.39px;'>Travel</div><div class='t' id='t77' style='top:977.04px;font-size:12px;line-height:12px;font-weight:400;color:#a1a1aa;letter-spacing:0.090px;left:675.47px;'>Advertising & Marketing</div><div class='t' id='t78' style='top:977.04px;font-size:12px;line-height:12px;font-weight:400;color:#a1a1aa;letter-spacing:0.090px;left:859.64px;'>Insurance</div><div class='t' id='t79' style='top:999.14px;font-size:12px;line-height:12px;font-weight:400;color:#a1a1aa;letter-spacing:0.090px;left:551.57px;'>Education & Training</div><div class='t' id='t80' style='top:999.14px;font-size:12px;line-height:12px;font-weight:400;color:#a1a1aa;letter-spacing:0.090px;left:721.34px;'>Office Supplies</div>
</body></html>
